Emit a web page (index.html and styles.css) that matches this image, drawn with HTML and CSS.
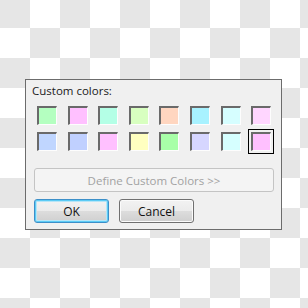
FILE: index.html
```html
<!DOCTYPE html>
<html lang="en">
<head>
    <meta charset="UTF-8">
    <title>Color</title>
    <link rel="stylesheet" href="styles.css">
</head>
<body>
    <div class="dialog">
        <div class="label">Custom colors:</div>
        <div class="swatches">
            <span class="swatch" style="background:#b4ffc0"></span>
            <span class="swatch" style="background:#ffc0ff"></span>
            <span class="swatch" style="background:#b4ffe6"></span>
            <span class="swatch" style="background:#d8ffc0"></span>
            <span class="swatch" style="background:#ffd6c0"></span>
            <span class="swatch" style="background:#a8f2ff"></span>
            <span class="swatch" style="background:#d6feff"></span>
            <span class="swatch" style="background:#ffd6ff"></span>
            <span class="swatch" style="background:#c0d6ff"></span>
            <span class="swatch" style="background:#c0d0ff"></span>
            <span class="swatch" style="background:#ffc0ff"></span>
            <span class="swatch" style="background:#ffffc0"></span>
            <span class="swatch" style="background:#a8ffa8"></span>
            <span class="swatch" style="background:#d6d6ff"></span>
            <span class="swatch" style="background:#d6ffff"></span>
            <span class="swatch selected" style="background:#ffc0ff"></span>
        </div>
        <button class="define" disabled>Define Custom Colors &gt;&gt;</button>
        <div class="actions">
            <button class="btn default">OK</button>
            <button class="btn">Cancel</button>
        </div>
    </div>
</body>
</html>
```

FILE: styles.css
```css
body {
    margin: 0;
    width: 308px;
    height: 308px;
    overflow: hidden;
    font-family: "Open Sans", "Noto Sans", sans-serif;
    font-size: 11.5px;
    background-color: #fff;
    background-image:
        linear-gradient(45deg, #e6e6e6 25%, transparent 25%, transparent 75%, #e6e6e6 75%),
        linear-gradient(45deg, #e6e6e6 25%, transparent 25%, transparent 75%, #e6e6e6 75%);
    background-size: 60px 60px;
    background-position: 0 28px, 30px -2px;
}

.dialog {
    margin: 79px 0 0 25px;
    width: 255px;
    height: 149px;
    border: 1px solid #6c6c6c;
    background: #f0f0f0;
}

.label {
    color: #1a1a1a;
    line-height: 16px;
    margin: 3px 0 0 6px;
}

.swatches {
    display: grid;
    grid-template-columns: repeat(8, 20px);
    column-gap: 10.6px;
    row-gap: 7px;
    margin: 7px 0 0 11px;
}

.swatch {
    display: block;
    width: 20px;
    height: 19px;
    box-sizing: border-box;
    border-style: solid;
    border-width: 2px 1px 1px 2px;
    border-color: #6a6a6a #fdfdfd #fdfdfd #6a6a6a;
}

.swatch.selected {
    outline: 1px solid #000;
    outline-offset: 2px;
}

.define {
    display: block;
    margin: 17px 0 0 8px;
    width: 240px;
    height: 24px;
    border: 1px solid #c4c4c4;
    border-radius: 3px;
    background: #f4f4f4;
    color: #a2a2a2;
    font-family: inherit;
    font-size: inherit;
    padding: 0;
}

.actions {
    display: flex;
    gap: 10px;
    margin: 7px 0 0 8px;
}

.btn {
    width: 75px;
    height: 24px;
    padding: 0;
    border: 1px solid #707070;
    border-radius: 3px;
    background: linear-gradient(#f2f2f2, #ebebeb 50%, #dddddd 50%, #cfcfcf);
    color: #111;
    font-family: inherit;
    font-size: 12px;
    box-shadow: inset 0 0 0 1px #fbfbfb;
}

.btn.default {
    border-color: #3c8fc8;
    box-shadow: inset 0 0 0 1px #5ccbf5, inset 0 0 0 2px #b6e5f7;
}
```
